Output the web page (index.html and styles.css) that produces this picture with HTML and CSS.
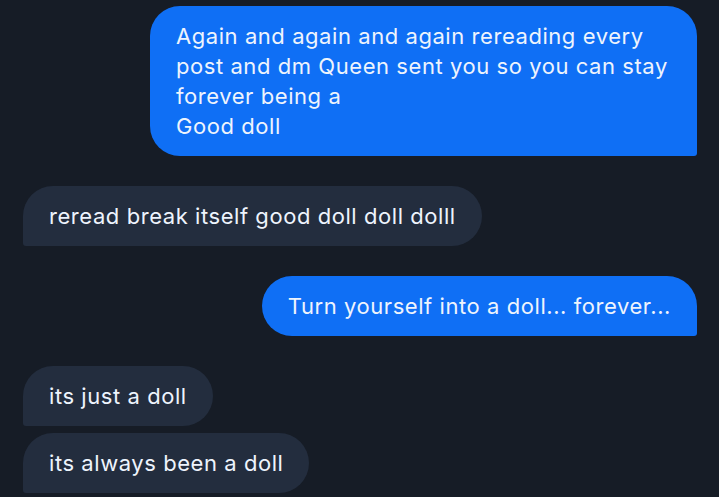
FILE: index.html
```html
<!DOCTYPE html>
<html>
<head>
<meta charset="utf-8">
<link rel="stylesheet" href="styles.css">
</head>
<body>
<div class="chat">
  <div class="msg sent">Again and again and again rereading every post and dm Queen sent you so you can stay forever being a<br>Good doll</div>
  <div class="msg recv">reread break itself good doll doll dolll</div>
  <div class="msg sent">Turn yourself into a doll... forever...</div>
  <div class="group">
    <div class="msg recv">its just a doll</div>
    <div class="msg recv">its always been a doll</div>
  </div>
</div>
</body>
</html>
```
FILE: styles.css
```css
html, body {
  margin: 0;
  padding: 0;
  background: #161c26;
  height: 100%;
  overflow: hidden;
}
.chat {
  display: flex;
  flex-direction: column;
  gap: 30px;
  padding: 6px 22px 0 23px;
  font-family: Inter, "Noto Sans", sans-serif;
  font-size: 22px;
  letter-spacing: 0.56px;
  line-height: 30px;
  color: #eef4fd;
}
.group {
  display: flex;
  flex-direction: column;
  align-items: flex-start;
  gap: 7px;
}
.msg {
  padding: 15px 26px;
  border-radius: 30px;
  max-width: 495px;
}
.sent {
  align-self: flex-end;
  background: #0f6ff5;
  border-bottom-right-radius: 3px;
}
.recv {
  align-self: flex-start;
  background: #232d3e;
  border-bottom-left-radius: 3px;
}
```
